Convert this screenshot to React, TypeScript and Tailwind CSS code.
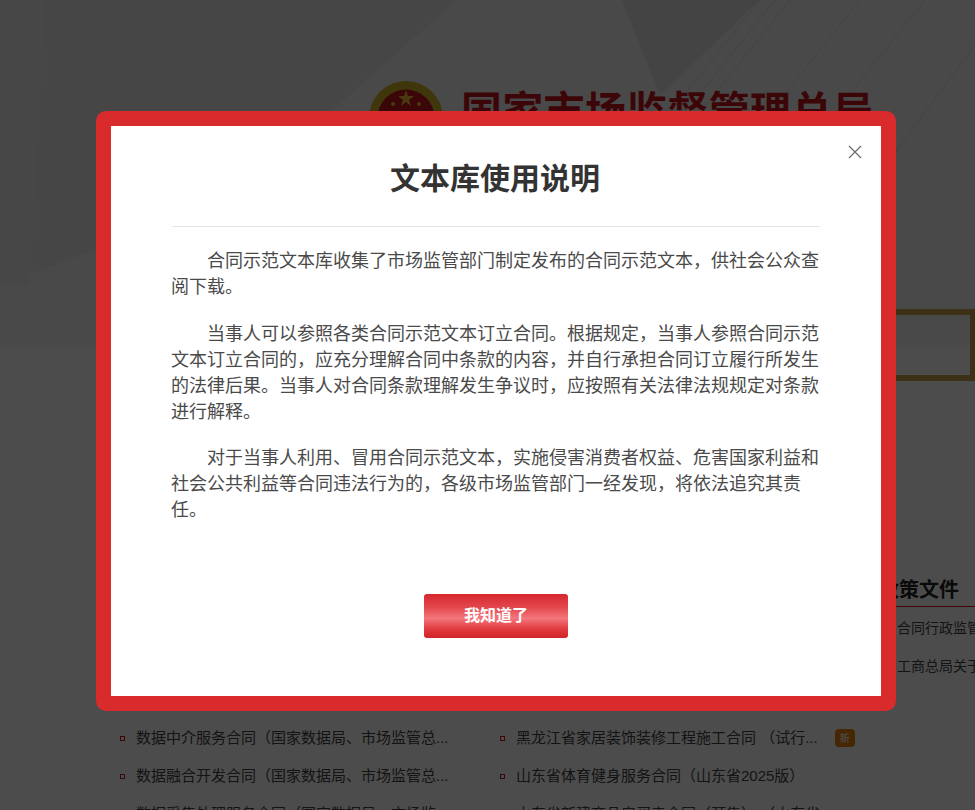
const cjk = "font-['Liberation_Sans','Noto_Sans_CJK_SC',sans-serif]";

const leftLinks = [
  "数据中介服务合同（国家数据局、市场监管总...",
  "数据融合开发合同（国家数据局、市场监管总...",
  "数据采集处理服务合同（国家数据局、市场监...",
];

const rightLinks = [
  "黑龙江省家居装饰装修工程施工合同 （试行...",
  "山东省体育健身服务合同（山东省2025版）",
  "山东省新建商品房买卖合同（预售） （山东省...",
];

function Emblem() {
  return (
    <svg viewBox="0 0 74 74" className="h-[74px] w-[74px] shrink-0">
      <circle cx="37" cy="37" r="37" fill="#d8b52a" />
      <circle cx="37" cy="37" r="28.5" fill="#c3161c" />
      <polygon points="37,9 39,15 45,15 40,19 42,25 37,21 32,25 34,19 29,15 35,15" fill="#f2c230" />
      <circle cx="24" cy="23" r="2" fill="#f2c230" />
      <circle cx="50" cy="23" r="2" fill="#f2c230" />
    </svg>
  );
}

function HeaderLines() {
  return (
    <svg viewBox="0 0 975 345" preserveAspectRatio="none" className="absolute inset-0 h-full w-full">
      <polygon points="0,285 230,200 457,0 975,0 975,345 0,345" fill="#f3f3f3" />
      <polygon points="0,0 45,0 30,285 0,285" fill="#eeeeee" />
      <polygon points="622,0 760,0 660,95" fill="#e4e4e4" />
      <g stroke="#e2e2e2" strokeWidth="1" fill="none">
        <path d="M760 0 L600 200" />
        <path d="M775 0 L615 200" />
        <path d="M790 0 L630 200" />
        <path d="M860 0 L700 200" />
        <path d="M925 0 L765 200" />
        <path d="M975 45 L860 200" />
      </g>
    </svg>
  );
}

export default function App() {
  return (
    <div className={`relative h-[810px] overflow-hidden bg-white ${cjk}`}>
      <header className="relative h-[345px] bg-[#ebebeb]">
        <HeaderLines />
        <div className="relative flex items-start gap-[18px] pl-[369px] pt-[81px]">
          <Emblem />
          <span className="mt-[6px] whitespace-nowrap text-[41px] font-bold leading-[50px] tracking-[0.3px] text-[#c8171d]">国家市场监督管理总局</span>
        </div>
      </header>

      <main className="relative">
        <div className="absolute left-[800px] top-[-36px] h-[72px] w-[175px] border-[6px] border-r-[5px] border-[#c9a14a]" />
        <div className="flex justify-end pt-[231px]">
          <div className="w-[96px] border-b border-[#e01020] pb-[2px] text-[20px] font-bold leading-[28px] text-[#222]">
            <span className="whitespace-nowrap">政策文件</span>
          </div>
        </div>
        <div className="mt-[2px] flex flex-col items-end">
          <p className="w-[78px] overflow-hidden whitespace-nowrap text-[14px] leading-[38px] text-[#444]">合同行政监管办法</p>
          <p className="w-[78px] overflow-hidden whitespace-nowrap text-[14px] leading-[38px] text-[#444]">工商总局关于合同</p>
        </div>
        <div className="flex pl-[120px] pt-[34px]">
          <ul className="flex w-[380px] flex-col">
            {leftLinks.map((link) => (
              <li key={link} className="flex h-[38px] items-center gap-[11px] whitespace-nowrap text-[15px] text-[#444]">
                <i className="h-[5px] w-[5px] border border-[#c3161c]" />
                {link}
              </li>
            ))}
          </ul>
          <ul className="flex flex-col">
            {rightLinks.map((link, i) => (
              <li key={link} className="flex h-[38px] items-center gap-[11px] whitespace-nowrap text-[15px] text-[#444]">
                <i className="h-[5px] w-[5px] border border-[#c3161c]" />
                {link}
                {i === 0 && (
                  <span className="ml-[6px] flex h-[18px] w-[20px] items-center justify-center rounded-[4px] bg-[#e8820f] text-[10px] text-white">新</span>
                )}
              </li>
            ))}
          </ul>
        </div>
      </main>

      <div className="absolute inset-0 bg-black/70 pl-[96px] pt-[111px]">
        <div className="relative flex h-[600px] w-[800px] flex-col rounded-[10px] border-[15px] border-[#d92b2b] bg-white px-[60px]">
          <button className="absolute right-[19px] top-[19px] text-[#666]">
            <svg viewBox="0 0 14 14" className="h-[14px] w-[14px]" fill="none" stroke="currentColor" strokeWidth="1.1">
              <path d="M1 1 L13 13 M13 1 L1 13" />
            </svg>
          </button>
          <h1 className="ml-[1px] mr-[1px] h-[101px] border-b border-[#e5e5e5] pt-[33px] pr-[2px] text-center text-[30px] font-bold leading-[40px] text-[#333]">文本库使用说明</h1>
          <div className="pt-[21px] text-[18px] leading-[26px] text-[#4a4a4a]">
            <p className="mb-[21px] indent-[36px]">合同示范文本库收集了市场监管部门制定发布的合同示范文本，供社会公众查阅下载。</p>
            <p className="mb-[20px] indent-[36px]">当事人可以参照各类合同示范文本订立合同。根据规定，当事人参照合同示范文本订立合同的，应充分理解合同中条款的内容，并自行承担合同订立履行所发生的法律后果。当事人对合同条款理解发生争议时，应按照有关法律法规规定对条款进行解释。</p>
            <p className="indent-[36px]">对于当事人利用、冒用合同示范文本，实施侵害消费者权益、危害国家利益和社会公共利益等合同违法行为的，各级市场监管部门一经发现，将依法追究其责任。</p>
          </div>
          <div className="mt-auto flex justify-center pb-[58px]">
            <button className="h-[44px] w-[144px] rounded-[3px] bg-[linear-gradient(180deg,#d6282e_0%,#e2474c_30%,#f4777c_55%,#e0393e_80%,#cf2329_100%)] text-[16px] font-bold text-white">我知道了</button>
          </div>
        </div>
      </div>
    </div>
  );
}
